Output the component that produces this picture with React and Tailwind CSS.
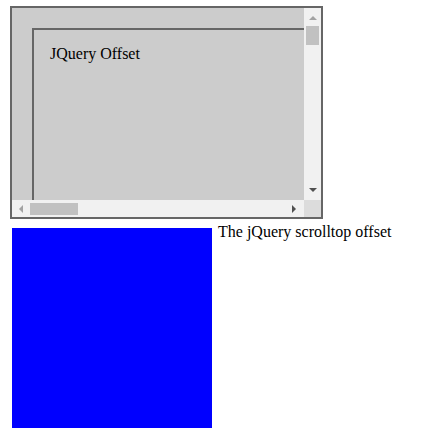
import React from 'react';

const serif = { fontFamily: '"Liberation Serif", "Times New Roman", serif' };

// Small triangle used for scrollbar arrow buttons
const Arrow = ({ dir, color }) => {
  const pts = {
    up: '0,4 4,0 8,4',
    down: '0,0 8,0 4,4',
    left: '4,0 4,8 0,4',
    right: '0,0 0,8 4,4',
  }[dir];
  const vertical = dir === 'up' || dir === 'down';
  return (
    <svg width={vertical ? 8 : 4} height={vertical ? 4 : 8} viewBox={vertical ? '0 0 8 4' : '0 0 4 8'}>
      <polygon points={pts} fill={color} />
    </svg>
  );
};

const ScrollBox = () => (
  <div className="ml-[10px] mt-[6px] grid h-[213px] w-[313px] grid-cols-[292px_17px] grid-rows-[192px_17px] border-2 border-[#666] bg-[#ccc]">
    <div className="overflow-hidden">
      <div className="ml-[20px] mt-[20px] h-[400px] w-[500px] border-l-2 border-t-2 border-[#666] pl-[16px] pt-[15px] text-[16px] leading-[18px] text-black" style={serif}>
        JQuery Offset
      </div>
    </div>
    <div className="flex flex-col items-center bg-[#f1f1f1]">
      <div className="flex h-[17px] items-center justify-center pt-[2px]">
        <Arrow dir="up" color="#a3a3a3" />
      </div>
      <div className="mt-[1px] h-[19px] w-[13px] bg-[#c1c1c1]" />
      <div className="flex-1" />
      <div className="flex h-[17px] items-center justify-center pb-[4px]">
        <Arrow dir="down" color="#505050" />
      </div>
    </div>
    <div className="flex items-center bg-[#f1f1f1]">
      <div className="flex w-[17px] justify-center pl-[1px]">
        <Arrow dir="left" color="#a3a3a3" />
      </div>
      <div className="ml-[1px] h-[12px] w-[48px] bg-[#c1c1c1]" />
      <div className="flex-1" />
      <div className="flex w-[17px] justify-center pr-[4px]">
        <Arrow dir="right" color="#505050" />
      </div>
    </div>
    <div className="bg-[#dcdcdc]" />
  </div>
);

export default function App() {
  return (
    <div className="h-[440px] w-[424px] bg-white">
      <ScrollBox />
      <div className="mt-[4px] flex items-start">
        <div className="ml-[12px] mt-[5px] h-[200px] w-[200px] bg-[#0000ff]" />
        <span className="ml-[6px] text-[16px] leading-[18px] text-black" style={serif}>
          The jQuery scrolltop offset
        </span>
      </div>
    </div>
  );
}
